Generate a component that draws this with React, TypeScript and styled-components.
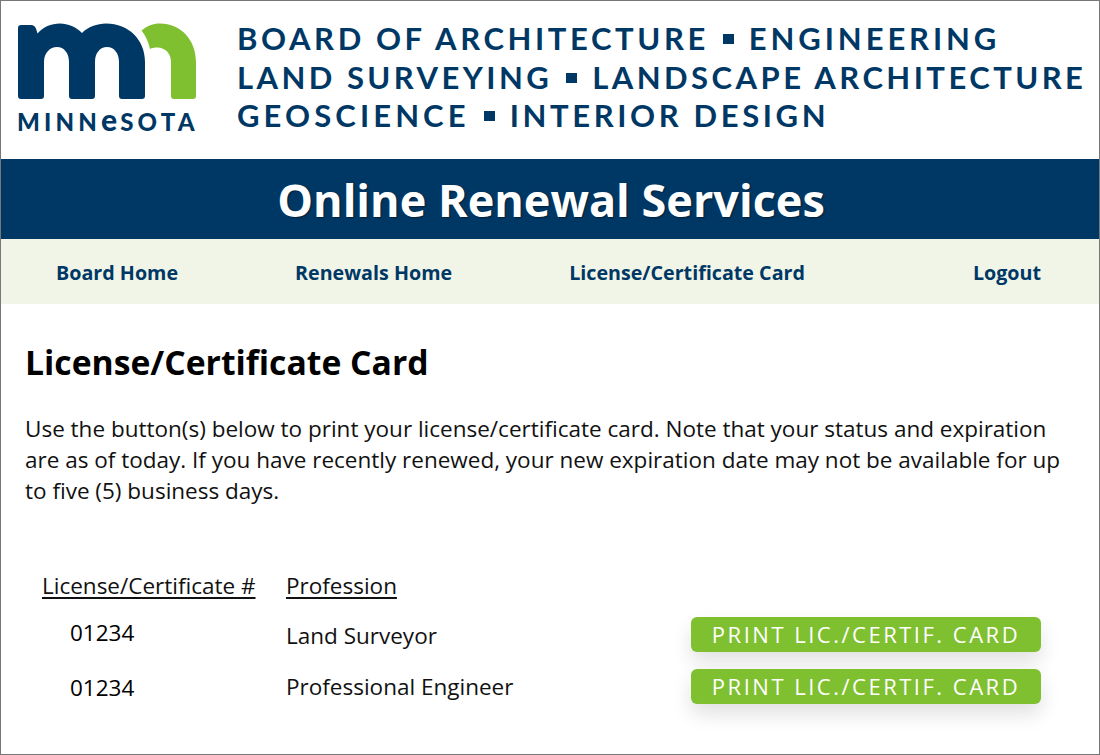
import React from "react";
import styled, { createGlobalStyle } from "styled-components";

const navy = "#003865";
const green = "#7fc031";

const GlobalStyle = createGlobalStyle`
  html, body {
    margin: 0;
    padding: 0;
    background: #fff;
  }
  * {
    box-sizing: border-box;
  }
`;

const SPage = styled.div`
  width: 1100px;
  height: 755px;
  border: 1px solid #777;
  overflow: hidden;
  background: #fff;
  font-family: "Open Sans", sans-serif;
  color: #111;
`;

const SHeader = styled.header`
  height: 158px;
  display: flex;
  padding: 22px 0 0 17px;
`;

const SLogo = styled.div`
  width: 180px;
  flex: none;
  display: flex;
  flex-direction: column;
`;

const SLogoMark = styled.svg`
  display: block;
  width: 180px;
  height: 78px;
`;

const SLogoWord = styled.div`
  margin: 3px 0 0 -1px;
  height: 30px;
  line-height: 30px;
  font-family: Lato, sans-serif;
  font-weight: 900;
  font-size: 24px;
  letter-spacing: 4.2px;
  color: ${navy};
  white-space: nowrap;
`;

const SLogoE = styled.span`
  font-size: 30px;
  letter-spacing: 3px;
`;

const SBoardName = styled.div`
  margin: -4px 0 0 39px;
  font-family: Lato, sans-serif;
  font-weight: 700;
  font-size: 31px;
  line-height: 38.5px;
  color: ${navy};
  white-space: nowrap;
`;

const SBoardWords = styled.span<{ $spacing: number }>`
  letter-spacing: ${(p) => p.$spacing}px;
`;

const SBullet = styled.span`
  display: inline-block;
  width: 11px;
  height: 10px;
  margin: 0 15px 0 14px;
  background: ${navy};
  vertical-align: 6px;
`;

const SBanner = styled.div`
  height: 80px;
  display: flex;
  align-items: center;
  justify-content: center;
  padding-left: 2px;
  background: ${navy};
  color: #fff;
  font-weight: 700;
  font-size: 45px;
  text-shadow: 1px 1px 2px rgba(0, 0, 0, 0.45);
`;

const SNav = styled.nav`
  height: 65px;
  display: flex;
  align-items: center;
  gap: 117px;
  padding: 2px 58px 0 55px;
  background: #f0f5e8;
`;

const SNavLink = styled.a<{ $end?: boolean }>`
  font-weight: 700;
  font-size: 19.7px;
  color: ${navy};
  text-decoration: none;
  margin-left: ${(p) => (p.$end ? "auto" : "0")};
`;

const SContent = styled.main`
  padding: 36px 20px 0 24px;
`;

const STitle = styled.h1`
  margin: 0;
  font-size: 33.7px;
  line-height: 44px;
  font-weight: 700;
  color: #000;
`;

const SIntro = styled.p`
  margin: 29px 0 0 0;
  font-size: 22.5px;
  line-height: 31px;
`;

const STable = styled.div`
  margin: 65px 0 0 17px;
  display: grid;
  grid-template-columns: 244px 405px 350px;
  font-size: 22.5px;
  line-height: 30px;
`;

const SHeadCell = styled.div`
  height: 31px;
  text-decoration: underline;
  text-underline-offset: 3px;
`;

const SNumberCell = styled.div<{ $top: number }>`
  height: 52px;
  padding: ${(p) => p.$top}px 0 0 28px;
  color: #000;
`;

const SProfessionCell = styled.div<{ $top: number }>`
  height: 52px;
  padding-top: ${(p) => p.$top}px;
`;

const SButtonCell = styled.div`
  height: 52px;
  display: flex;
  align-items: flex-end;
  padding-bottom: 2px;
`;

const SPrintButton = styled.button`
  width: 350px;
  height: 35px;
  border: 0;
  border-radius: 6px;
  padding: 0 0 2px 0;
  background: ${green};
  color: #fff;
  font-family: "Open Sans", sans-serif;
  font-size: 22px;
  letter-spacing: 2.5px;
  box-shadow: 0 10px 20px rgba(0, 0, 0, 0.12);
`;

const rows = [
  { number: "01234", profession: "Land Surveyor", numberTop: 16, professionTop: 19 },
  { number: "01234", profession: "Professional Engineer", numberTop: 19, professionTop: 18 },
];

export default function App() {
  return (
    <SPage>
      <GlobalStyle />
      <SHeader>
        <SLogo>
          <SLogoMark viewBox="18 23 180 78">
            <path
              fill={navy}
              d="M21 25 H31 Q35 25 36.500 30 L37.500 33.500 C43 27 51 23.500 60 23.500 C68 23.500 76 27 82 33 C88 27 97 23.500 106 23.500 C129 23.500 145 40 145 62 V96 Q145 99 142 99 H122 Q119 99 119 96 V62 C119 53 114 47 107 47 C100 47 95 53 95 62 V96 Q95 99 92 99 H72 Q69 99 69 96 V62 C69 53 64 47 57 47 C50 47 44 53 44 62 V96 Q44 99 41 99 H21 Q18 99 18 96 V28 Q18 25 21 25 Z"
            />
            <path
              fill={green}
              d="M141.500 30.500 C147 26 153 23.500 160 23.500 C181 23.500 196 40 196 62 V96 Q196 99 193 99 H174 Q171 99 171 96 V62 C171 54 166 47.500 157 47.500 C154 47.500 152 48 150 49 C148.500 42 145.500 35.500 141.500 30.500 Z"
            />
          </SLogoMark>
          <SLogoWord>
            MINN<SLogoE>e</SLogoE>SOTA
          </SLogoWord>
        </SLogo>
        <SBoardName>
          <div>
            <SBoardWords $spacing={3.6}>BOARD OF ARCHITECTURE</SBoardWords>
            <SBullet />
            <SBoardWords $spacing={3.9}>ENGINEERING</SBoardWords>
          </div>
          <div>
            <SBoardWords $spacing={3.45}>LAND SURVEYING</SBoardWords>
            <SBullet />
            <SBoardWords $spacing={3.45}>LANDSCAPE ARCHITECTURE</SBoardWords>
          </div>
          <div>
            <SBoardWords $spacing={4.1}>GEOSCIENCE</SBoardWords>
            <SBullet />
            <SBoardWords $spacing={3.63}>INTERIOR DESIGN</SBoardWords>
          </div>
        </SBoardName>
      </SHeader>
      <SBanner>Online Renewal Services</SBanner>
      <SNav>
        <SNavLink href="#">Board Home</SNavLink>
        <SNavLink href="#">Renewals Home</SNavLink>
        <SNavLink href="#">License/Certificate Card</SNavLink>
        <SNavLink href="#" $end>
          Logout
        </SNavLink>
      </SNav>
      <SContent>
        <STitle>License/Certificate Card</STitle>
        <SIntro>
          Use the button(s) below to print your license/certificate card. Note that your status and expiration
          <br />
          are as of today. If you have recently renewed, your new expiration date may not be available for up
          <br />
          to five (5) business days.
        </SIntro>
        <STable>
          <SHeadCell>License/Certificate #</SHeadCell>
          <SHeadCell>Profession</SHeadCell>
          <div />
          {rows.map((row) => (
            <React.Fragment key={row.profession}>
              <SNumberCell $top={row.numberTop}>{row.number}</SNumberCell>
              <SProfessionCell $top={row.professionTop}>{row.profession}</SProfessionCell>
              <SButtonCell>
                <SPrintButton>PRINT LIC./CERTIF. CARD</SPrintButton>
              </SButtonCell>
            </React.Fragment>
          ))}
        </STable>
      </SContent>
    </SPage>
  );
}
